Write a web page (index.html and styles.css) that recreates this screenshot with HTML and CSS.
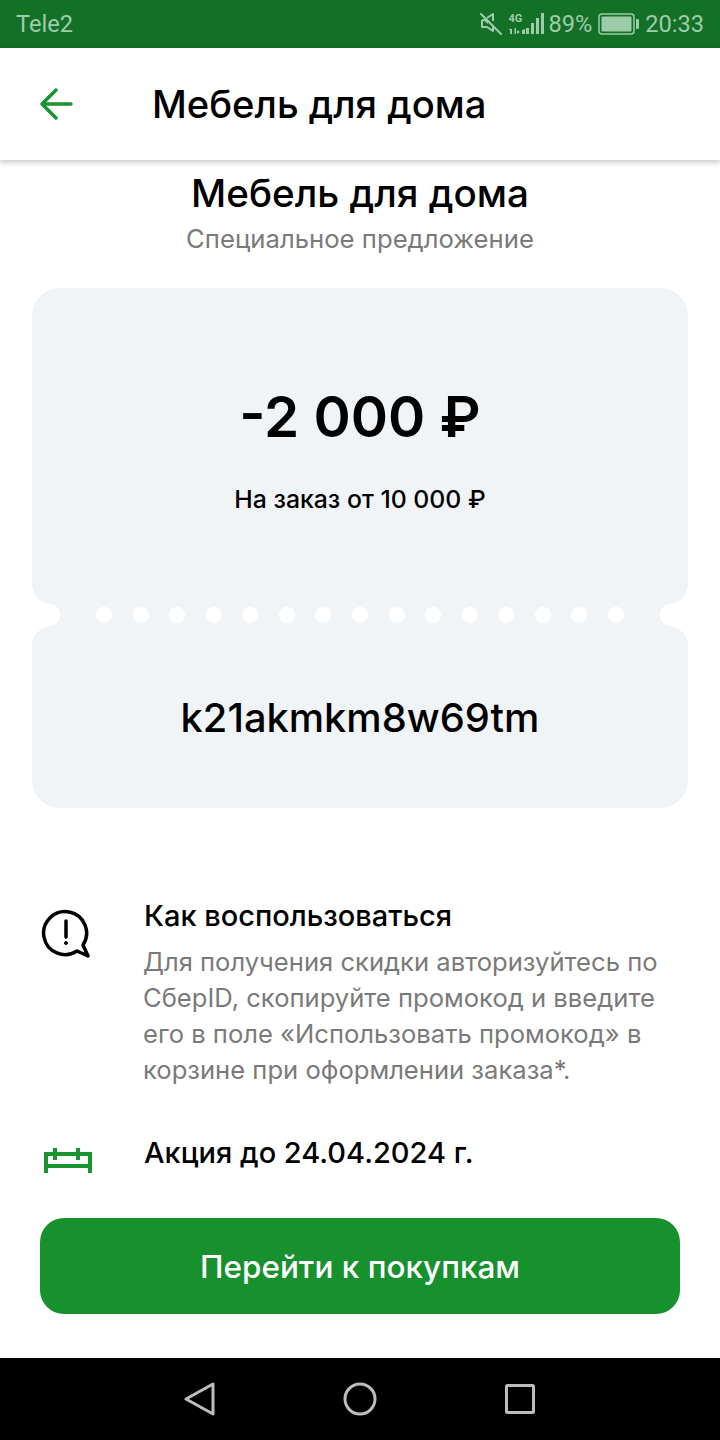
FILE: index.html
```html
<!DOCTYPE html>
<html lang="ru">

<head>
  <meta charset="UTF-8">
  <title>Мебель для дома</title>
  <link rel="stylesheet" href="styles.css">
</head>

<body>

  <div class="status-bar">
    <span class="carrier">Tele2</span>
    <div class="status-right">
      <svg class="icon-mute" width="24" height="24" viewBox="0 0 24 24" fill="none" stroke="#9fcca8" stroke-width="2">
        <path d="M2 2l20 20" stroke-linecap="round" />
        <path d="M3 8h3l3 3M8 6l6-4v7M14 15v4l-6-4H3V8" stroke-linejoin="round" />
      </svg>
      <svg class="icon-signal" width="40" height="24" viewBox="0 0 40 24" fill="#9fcca8">
        <text x="1.500" y="10" class="net-label">4G</text>
        <path d="M3 17h2v5H3zM1.500 18l2-1.500v1.500zM7.500 16h1.500v6H7.500zM10 18l3 2-3 2zM15 18l3-1v5h-3zM19 16h3v6h-3zM24 11h3v11h-3zM29 6h3v16h-3zM34 1h3v21h-3z" />
      </svg>
      <span class="status-text">89%</span>
      <svg class="icon-battery" width="41" height="22" viewBox="0 0 41 22">
        <rect x="1" y="1" width="35" height="20" rx="3" fill="none" stroke="#9fcca8" stroke-width="1.500" />
        <rect x="3.500" y="3.500" width="30" height="15" rx="1" fill="#9fcca8" />
        <rect x="38" y="6" width="3" height="10" rx="1" fill="#9fcca8" />
      </svg>
      <span class="status-text">20:33</span>
    </div>
  </div>

  <header class="app-header">
    <svg class="icon-back" width="34" height="32" viewBox="0 0 34 32" fill="none" stroke="#1a9331" stroke-width="3.500" stroke-linecap="round" stroke-linejoin="round">
      <path d="M2 16h29M16 2L2 16l14 14" />
    </svg>
    <div class="app-title">Мебель для дома</div>
  </header>

  <main class="content">
    <h1 class="offer-title">Мебель для дома</h1>
    <p class="offer-sub">Специальное предложение</p>

    <div class="ticket">
      <div class="ticket-top">
        <div class="amount">-2 000 ₽</div>
        <div class="condition">На заказ от 10 000 ₽</div>
      </div>
      <div class="perforation">
        <span class="notch notch-left"></span>
        <div class="dots">
          <i></i><i></i><i></i><i></i><i></i><i></i><i></i><i></i><i></i><i></i><i></i><i></i><i></i><i></i><i></i>
        </div>
        <span class="notch notch-right"></span>
      </div>
      <div class="ticket-bottom">k21akmkm8w69tm</div>
    </div>

    <section class="info-row info-how">
      <svg class="info-icon" width="54" height="54" viewBox="0 0 54 54" fill="none" stroke="#000" stroke-width="3.500" stroke-linecap="round" stroke-linejoin="round">
        <path d="M43 40A21.500 21.500 0 1 0 37 46L48 51z" />
        <path d="M26 16v16" />
        <circle cx="26" cy="38" r="1.500" fill="#000" stroke-width="1" />
      </svg>
      <div class="info-text">
        <h2>Как воспользоваться</h2>
        <p>Для получения скидки авторизуйтесь по СберID, скопируйте промокод и введите его в поле «Использовать промокод» в корзине при оформлении заказа*.</p>
      </div>
    </section>

    <section class="info-row info-date">
      <svg class="info-icon" width="54" height="32" viewBox="0 0 54 32" fill="none" stroke="#1a9331" stroke-width="4">
        <path d="M6 27V8h44v19M6 20h44" />
        <path d="M15 2v12M38 2v12" />
      </svg>
      <div class="info-text">
        <h2>Акция до 24.04.2024 г.</h2>
      </div>
    </section>

    <button class="main-btn">Перейти к покупкам</button>
  </main>

  <nav class="nav-bar">
    <svg width="31" height="34" viewBox="0 0 31 34" fill="none" stroke="#bdbdbd" stroke-width="3" stroke-linejoin="round">
      <path d="M2 17L29 2v30z" />
    </svg>
    <svg width="34" height="34" viewBox="0 0 34 34" fill="none" stroke="#bdbdbd" stroke-width="3">
      <circle cx="17" cy="17" r="15" />
    </svg>
    <svg width="30" height="30" viewBox="0 0 30 30" fill="none" stroke="#bdbdbd" stroke-width="3" stroke-linejoin="round">
      <rect x="1.500" y="1.500" width="27" height="27" rx="1" />
    </svg>
  </nav>

</body>

</html>
```

FILE: styles.css
```css
* {
  box-sizing: border-box;
}

body {
  margin: 0;
  width: 720px;
  height: 1440px;
  overflow: hidden;
  display: flex;
  flex-direction: column;
  background-color: #fff;
  color: #000;
  font-family: Inter, 'Noto Sans', sans-serif;
}

.status-bar {
  height: 48px;
  flex: none;
  display: flex;
  align-items: center;
  justify-content: space-between;
  padding: 0 16px;
  background-color: #127027;
  color: #9fcca8;
  font-family: Roboto, sans-serif;
  font-size: 23.6px;
}

.status-right {
  display: flex;
  align-items: center;
}

.icon-mute {
  margin-right: 4px;
}

.icon-signal {
  margin-right: 1px;
}

.net-label {
  font-size: 11px;
  font-weight: 700;
}

.icon-battery {
  margin: 0 6px;
}

.app-header {
  height: 112px;
  flex: none;
  display: flex;
  align-items: center;
  padding-left: 40px;
  background-color: #fff;
  box-shadow: 0 2px 6px rgba(0, 0, 0, 0.25);
  position: relative;
}

.app-title {
  margin-left: 78px;
  font-size: 38.2px;
  font-weight: 500;
}

.content {
  flex: 1;
  display: flex;
  flex-direction: column;
  padding: 0 32px;
}

.offer-title {
  margin: 9px 0 0;
  text-align: center;
  font-size: 38.6px;
  line-height: 48px;
  font-weight: 500;
}

.offer-sub {
  margin: 4px 0 0;
  text-align: center;
  font-size: 25.7px;
  line-height: 36px;
  color: #7a7a7a;
}

.ticket {
  margin-top: 31px;
}

.ticket-top {
  height: 316px;
  padding-top: 93px;
  text-align: center;
  background-color: #f0f4f7;
  border-radius: 28px 28px 20px 20px;
}

.amount {
  font-size: 56.5px;
  line-height: 72px;
  font-weight: 600;
}

.condition {
  margin-top: 31px;
  font-size: 24.8px;
  line-height: 30px;
  font-weight: 500;
}

.perforation {
  height: 22px;
  display: flex;
  align-items: center;
  background-color: #f0f4f7;
}

.notch {
  width: 28px;
  height: 22px;
  flex: none;
  background-color: #fff;
}

.notch-left {
  border-radius: 0 11px 11px 0;
}

.notch-right {
  border-radius: 11px 0 0 11px;
}

.dots {
  flex: 1;
  display: flex;
  justify-content: space-between;
  padding: 0 36px;
}

.dots i {
  width: 16px;
  height: 16px;
  border-radius: 50%;
  background-color: #fff;
}

.ticket-bottom {
  height: 182px;
  padding-top: 69px;
  text-align: center;
  font-size: 39.8px;
  line-height: 46px;
  font-weight: 500;
  background-color: #f0f4f7;
  border-radius: 20px 20px 28px 28px;
}

.info-row {
  display: flex;
  padding-left: 8px;
}

.info-how {
  margin-top: 90px;
}

.info-date {
  margin-top: 47px;
}

.info-icon {
  flex: none;
  margin-top: 7px;
}

.info-date .info-icon {
  margin-top: 11px;
}

.info-text {
  margin-left: 50px;
}

.info-text h2 {
  margin: 0;
  font-size: 29px;
  line-height: 36px;
  font-weight: 500;
}

.info-text p {
  margin: 10px 0 0 -1px;
  font-size: 25.6px;
  line-height: 36px;
  color: #7a7a7a;
}

.main-btn {
  margin: 40px 8px 0;
  height: 96px;
  flex: none;
  border: none;
  border-radius: 24px;
  background-color: #17902e;
  color: #fff;
  font-family: inherit;
  font-size: 31.5px;
  font-weight: 500;
}

.nav-bar {
  height: 82px;
  flex: none;
  display: flex;
  align-items: center;
  justify-content: space-between;
  padding: 0 185px 0 184px;
  background-color: #000;
}
```
